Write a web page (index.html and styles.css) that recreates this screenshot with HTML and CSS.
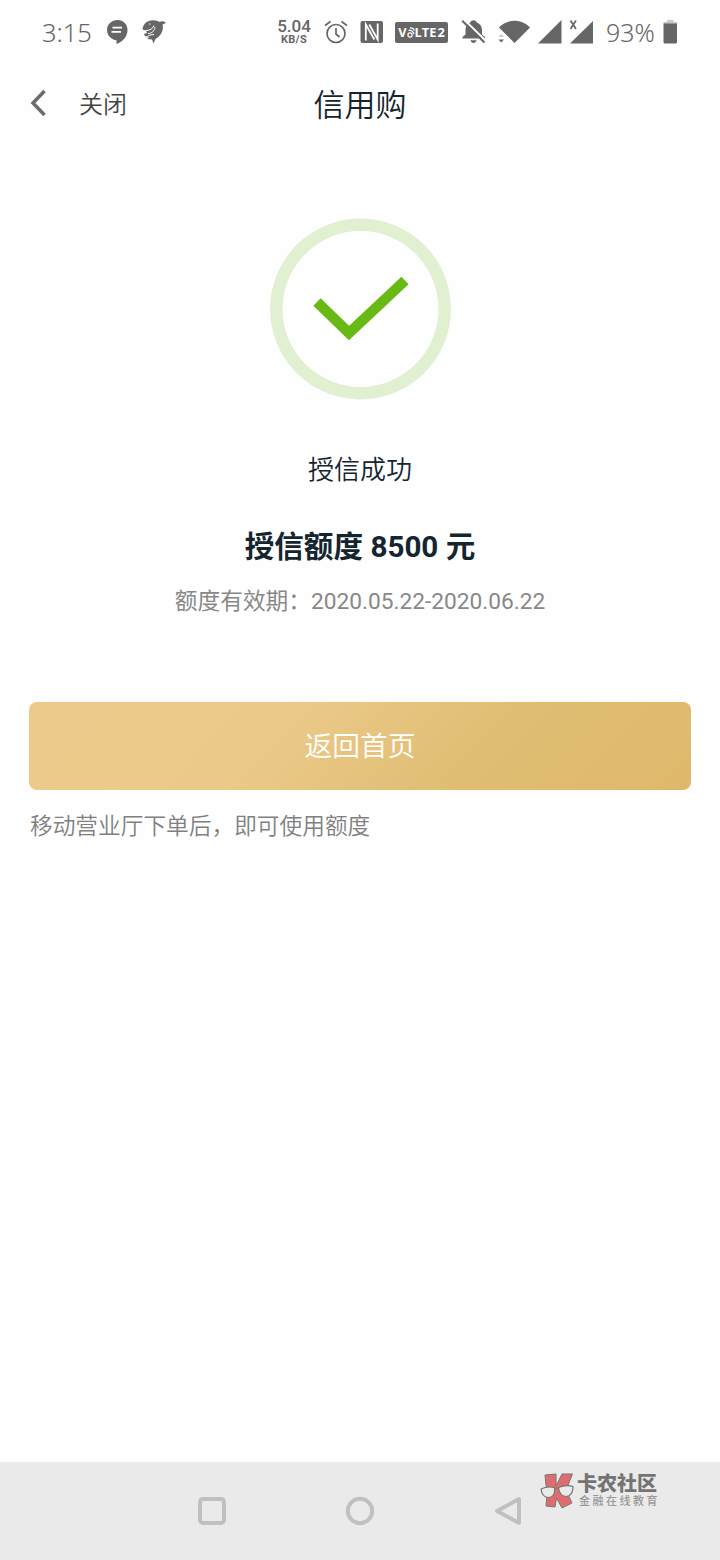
FILE: index.html
```html
<!DOCTYPE html>
<html lang="zh-CN">
<head>
<meta charset="utf-8">
<title>信用购</title>
<link rel="stylesheet" href="styles.css">
</head>
<body>
<div class="screen">
  <div class="status">
    <span class="time">3:15</span>
    <svg class="chat" width="22" height="26" viewBox="0 0 22 26"><path d="M10.500 1C4.700 1 0 5.400 0 11S4.700 21 9.500 21.200V25C16 22.500 20.500 17.500 20.500 11C20.500 5.400 16.500 1 10.500 1Z"/><path class="cut" d="M5.500 8.600H15M4.500 12.800H14"/></svg>
    <svg class="shark" width="26" height="26" viewBox="0 0 26 26"><path d="M1.500 10.500C2 5 6 1.200 12 1.200C15 1.200 17 2 18.500 3C20.500 1.500 23 2 25 4L21.500 5.500C23 11 20 17 14.500 20L12.500 24.500L11 20.500L6 20L8.500 18.500C5 18.500 3.500 17.500 3 15L6 14L5 11.500Z"/><path class="bite" d="M5 11.500C9 11.500 12 9.500 13 6.500M7 14.500C11 14.500 13.500 12 14 8M1 15C2 18 6 18.500 9 16L13 15.500M8 5H9.500"/></svg>
    <span class="speed"><b>5.04</b><small>KB/S</small></span>
    <svg class="alarm" width="24" height="24" viewBox="0 0 24 24"><circle cx="12" cy="13.500" r="9"/><path d="M12 8V14L15.500 17M1 5.500L6.500 1.500M23 5.500L17.500 1.500"/></svg>
    <svg class="nfc" width="24" height="24" viewBox="0 0 24 24"><rect x=".5" y="1" width="22.500" height="22" rx="2"/><path d="M5.800 20.500V4.500L14.300 19.500M9.300 4.500L17.700 19.500V3.500"/></svg>
    <span class="volte"><span>V</span><svg width="8" height="15" viewBox="0 0 8 15"><circle cx="3" cy="10" r="2.100"/><path d="M1.500 5.500C4 4.500 6.500 6.500 7 9M3 3C5.500 2.500 7 4 7.500 5.500"/></svg><span>LTE</span><span class="two">2</span></span>
    <svg class="bell" width="26" height="26" viewBox="0 0 26 26"><path d="M1.500 19.500V18L4.500 15.500V10C5 6.500 7 4.300 9.500 3.300C9.500.5 15.500.5 15.500 3.300C19 4.500 21 7.500 21 11V15.500L24 18V19.500ZM9.500 21.200H15.500C15 24.800 10 24.800 9.500 21.200Z"/><path class="gap" d="M2.500 0L25 22"/><path class="slash" d="M1.200 1.800L23.500 23.500"/></svg>
    <svg class="wifi" width="33" height="26" viewBox="0 0 33 26"><path d="M1 8.500C9-.5 24-.5 32 8.500L16.500 24ZM.5 20.500H6L3.200 23.500Z"/><path class="faint" d="M.5 18H6L3.200 15Z"/></svg>
    <svg class="signal" width="24" height="24" viewBox="0 0 24 24"><path d="M0 23.500L23.500 0V23.500Z"/></svg>
    <svg class="signal-x" width="25" height="26" viewBox="0 0 25 26"><path d="M1 24.500L24 2V24.500Z"/><path class="x" d="M1.500 1.500L7 10M7 1.500L1.500 10"/></svg>
    <span class="percent">93%</span>
    <svg class="battery" width="15" height="26" viewBox="0 0 15 26"><path class="faint" d="M4 1H10.500V3H14V5H.5V3H4Z"/><path d="M.5 4.500H14V23Q14 24.500 12.500 24.500H2Q.5 24.500 .5 23Z"/></svg>
  </div>

  <header class="nav">
    <div class="nav-left">
      <svg width="18" height="30" viewBox="0 0 18 30"><path d="M14.500 3L3 15L14.500 27"/></svg>
      <span>关闭</span>
    </div>
    <h1>信用购</h1>
  </header>

  <main class="content">
    <svg class="success" width="182" height="182" viewBox="0 0 182 182"><circle cx="91.500" cy="91" r="84.200"/><path d="M48 84L80 115L136 62.500"/></svg>
    <p class="result">授信成功</p>
    <p class="amount">授信额度 8500 元</p>
    <p class="period">额度有效期：2020.05.22-2020.06.22</p>
    <button class="home">返回首页</button>
    <p class="note">移动营业厅下单后，即可使用额度</p>
  </main>

  <footer class="keys">
    <svg class="recent" width="30" height="30" viewBox="0 0 30 30"><rect x="3" y="3" width="24" height="24" rx="3"/></svg>
    <svg class="circle" width="30" height="30" viewBox="0 0 30 30"><circle cx="15" cy="15" r="12.200"/></svg>
    <svg class="back" width="30" height="30" viewBox="0 0 30 30"><path d="M26 3L4 15L26 27Z"/></svg>
    <div class="brand">
      <svg width="36" height="38" viewBox="0 0 36 38"><path class="red" d="M5 3L16 2V14L22 2H32.500L26 18L32 31L22 36L16.500 26L15 35L6 34L7 23Z"/><path class="lens" d="M1 17Q7 14 14.500 15.500Q15.500 25.500 8 25.500Q2 25 1 17ZM18.500 15.500Q26 12.500 33 14.500Q33 24 26 24.500Q19.500 24 18.500 15.500ZM14.500 16.500L18.500 16"/></svg>
      <div class="brand-text"><strong>卡农社区</strong><span>金融在线教育</span></div>
    </div>
  </footer>
</div>
</body>
</html>
```
FILE: styles.css
```css
* { box-sizing: border-box; margin: 0; padding: 0; }
body { background: #fff; font-family: Roboto, "Noto Sans CJK SC", sans-serif; }
svg { display: block; flex: none; }
.screen { width: 720px; height: 1560px; display: flex; flex-direction: column; background: #fefefe; overflow: hidden; }

.status { height: 64px; padding-left: 42px; display: flex; align-items: center; color: #666; fill: #666; white-space: nowrap; flex: none; }
.status > * { flex: none; }
.time { width: 65px; font: 300 25.500px/32px "Noto Sans", sans-serif; }
.cut { stroke: #fefefe; stroke-width: 1.700; }
.shark { margin-left: 12px; }
.bite { fill: none; stroke: #fefefe; stroke-width: 1; }
.speed { width: 34px; margin-left: 110px; display: flex; flex-direction: column; align-items: center; }
.speed b { font: 500 17px/15px Roboto, sans-serif; }
.speed small { font: 700 11px/11px Roboto, sans-serif; letter-spacing: .3px; }
.alarm { margin-left: 13px; fill: none; stroke: #666; stroke-width: 1.700; }
.nfc { margin-left: 12px; }
.nfc path { fill: none; stroke: #fefefe; stroke-width: 1.800; }
.volte { width: 53px; height: 21px; margin-left: 11px; border-radius: 2px; display: flex; align-items: center; justify-content: center; background: #666; color: #fff; font: 700 12.800px/21px "Open Sans", sans-serif; }
.volte svg { fill: none; stroke: #fff; stroke-width: 1.300; }
.two { margin-left: 1px; }
.bell { margin-left: 13px; }
.gap { stroke: #fefefe; stroke-width: 2; }
.slash { stroke: #666; stroke-width: 2; }
.wifi { margin-left: 11px; }
.faint { fill: #c8c8c8; }
.signal { margin-left: 7px; }
.signal-x { margin-left: 7px; }
.x { fill: none; stroke: #666; stroke-width: 1.700; }
.percent { width: 57px; margin-left: 12px; font: 300 25px/32px "Noto Sans", sans-serif; }

.nav { height: 80px; padding: 0 30px 2px; display: grid; grid-template-columns: 1fr auto 1fr; align-items: center; flex: none; font-family: "Noto Sans CJK SC", sans-serif; }
.nav-left { display: flex; align-items: center; gap: 31px; font-size: 24px; font-weight: 350; line-height: 36px; color: #444; }
.nav-left svg { fill: none; stroke: #6a6d70; stroke-width: 3.500; }
.nav-left span { margin-top: -1px; }
.nav h1 { margin-top: -1px; font-size: 31px; line-height: 44px; font-weight: 350; color: #142530; }

.content { flex: 1; padding: 74px 29px 0; display: flex; flex-direction: column; align-items: center; color: #142530; }
.success { fill: none; }
.success circle { stroke: #e0f0d0; stroke-width: 12.500; }
.success path { stroke: #69b914; stroke-width: 10.500; }
.result { margin-top: 52px; font-size: 26px; font-weight: 350; line-height: 36px; }
.amount { margin-top: 39px; font-size: 29.600px; line-height: 40px; font-weight: 700; }
.period { margin-top: 20px; font-size: 22.700px; line-height: 30px; color: #888; }
.home { width: 662px; height: 88px; margin-top: 85px; border: 0; border-radius: 8px; padding-bottom: 3px; background: linear-gradient(135deg, #ebca8b 0%, #ebca89 36%, #e0bd73 68%, #dfb86b 100%); color: #fff; font: 350 27.800px/85px "Noto Sans CJK SC", sans-serif; }
.note { align-self: flex-start; margin-top: 21px; padding-left: 1px; font-size: 22.700px; font-weight: 350; line-height: 32px; color: #808080; }

.keys { height: 98px; padding-left: 197px; display: flex; align-items: center; background: #eaeaea; fill: none; stroke: #c0c0c0; stroke-width: 4; stroke-linejoin: round; flex: none; }
.circle { margin-left: 118px; }
.back { margin-left: 118px; }
.brand { margin: -41px 0 0 17px; display: flex; align-items: center; gap: 1px; stroke: none; }
.red { fill: #e16c70; stroke: #777; stroke-width: 1; }
.lens { fill: #eaeaea; stroke: #777; stroke-width: 1.200; }
.brand-text { display: flex; flex-direction: column; color: #747474; white-space: nowrap; font-family: "Liberation Sans", "Noto Sans CJK SC", sans-serif; }
.brand-text strong { font-size: 20px; line-height: 22px; font-weight: 900; }
.brand-text span { padding-left: 2px; font-size: 11px; line-height: 13px; font-weight: 500; letter-spacing: 2.500px; color: #999; }
```
